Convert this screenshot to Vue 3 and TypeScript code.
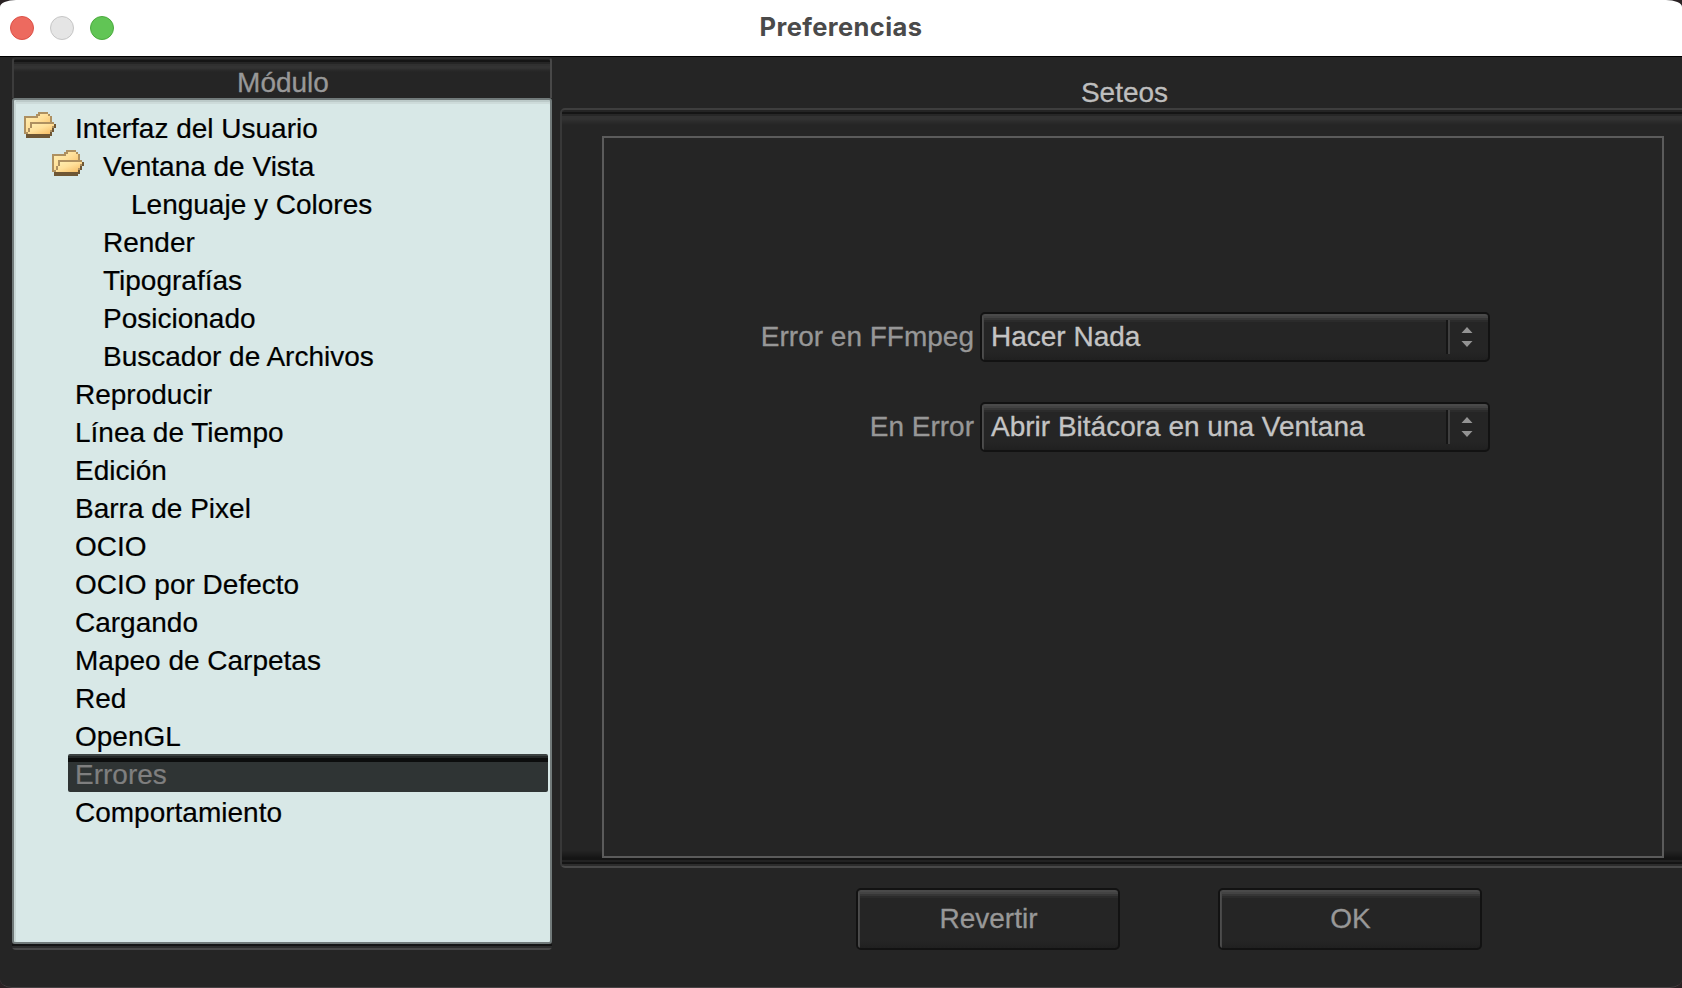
<script setup lang="ts">
import { ref } from 'vue'

interface TreeItem {
  label: string
  level: number
  folder?: boolean
}

interface Setting {
  label: string
  value: string
}

const items: TreeItem[] = [
  { label: 'Interfaz del Usuario', level: 0, folder: true },
  { label: 'Ventana de Vista', level: 1, folder: true },
  { label: 'Lenguaje y Colores', level: 2 },
  { label: 'Render', level: 1 },
  { label: 'Tipografías', level: 1 },
  { label: 'Posicionado', level: 1 },
  { label: 'Buscador de Archivos', level: 1 },
  { label: 'Reproducir', level: 0 },
  { label: 'Línea de Tiempo', level: 0 },
  { label: 'Edición', level: 0 },
  { label: 'Barra de Pixel', level: 0 },
  { label: 'OCIO', level: 0 },
  { label: 'OCIO por Defecto', level: 0 },
  { label: 'Cargando', level: 0 },
  { label: 'Mapeo de Carpetas', level: 0 },
  { label: 'Red', level: 0 },
  { label: 'OpenGL', level: 0 },
  { label: 'Errores', level: 0 },
  { label: 'Comportamiento', level: 0 },
]

const settings: Setting[] = [
  { label: 'Error en FFmpeg', value: 'Hacer Nada' },
  { label: 'En Error', value: 'Abrir Bitácora en una Ventana' },
]

const selected = ref('Errores')
</script>

<template>
  <div class="window">
    <header class="titlebar">
      <div class="lights">
        <span class="light close"></span>
        <span class="light minimize"></span>
        <span class="light zoom"></span>
      </div>
      <h1>Preferencias</h1>
    </header>

    <main class="body">
      <aside class="modules">
        <div class="modules-head">Módulo</div>
        <ul class="tree">
          <li
            v-for="item in items"
            :key="item.label"
            :class="['row', `level-${item.level}`, { selected: item.label === selected }]"
            @click="selected = item.label"
          >
            <span class="icon-slot">
              <svg v-if="item.folder" class="folder" viewBox="0 0 16 13" shape-rendering="crispEdges">
                <defs>
                  <linearGradient id="folder-fill" x1="0" y1="0" x2="1" y2="1">
                    <stop offset="0" stop-color="#ffefb2" />
                    <stop offset="0.45" stop-color="#ffe09a" />
                    <stop offset="1" stop-color="#f5b85e" />
                  </linearGradient>
                </defs>
                <path fill="#ae9060" d="M0 2h6V1h1V0h5v1h1v1h1v3h1v1h1v2h-1v2h-1v2H1v-1H0z" />
                <path fill="url(#folder-fill)" d="M1 3h6V2h1V1h4v1h1v3H3v3H2v2H1z" />
                <path fill="url(#folder-fill)" d="M4 6h11v1h-1v2h-1v2H2v-1h1V8h1z" />
                <path fill="#6e5634" d="M1 11h12v-1h1V8h1V6h1v2h-1v2h-1v2h-1v1H1z" />
              </svg>
            </span>
            <span class="row-label">{{ item.label }}</span>
          </li>
        </ul>
        <div class="modules-foot"></div>
      </aside>

      <section class="settings">
        <h2>Seteos</h2>
        <div class="panel">
          <div class="group">
            <div v-for="s in settings" :key="s.label" class="field">
              <label>{{ s.label }}</label>
              <div class="choice">
                <span class="choice-value">{{ s.value }}</span>
                <span class="choice-arrows">
                  <svg viewBox="0 0 12 20">
                    <path d="M6 0l5.5 6h-11zM6 20l5.5-6h-11z" fill="#939393" />
                  </svg>
                </span>
              </div>
            </div>
          </div>
        </div>
        <footer class="actions">
          <button type="button">Revertir</button>
          <button type="button">OK</button>
        </footer>
      </section>
    </main>
  </div>
</template>

<style>
html,
body {
  margin: 0;
  background: #2a2224;
  overflow: hidden;
}
</style>

<style scoped>
.window {
  box-sizing: border-box;
  width: 1682px;
  height: 988px;
  display: flex;
  flex-direction: column;
  overflow: hidden;
  background: #252525;
  border-bottom: 1px solid #484345;
  border-radius: 16px 16px 12px 12px / 7px 7px 9px 9px;
  font-family: 'Liberation Sans', Arial, sans-serif;
  font-size: 28px;
}

.titlebar {
  box-sizing: border-box;
  flex: none;
  height: 57px;
  display: grid;
  grid-template-columns: 1fr auto 1fr;
  align-items: center;
  background: #fff;
  border-bottom: 1px solid #000;
}
.lights {
  display: flex;
  gap: 16px;
  padding-left: 10px;
}
.light {
  box-sizing: border-box;
  width: 24px;
  height: 24px;
  border-radius: 50%;
  border: 1px solid;
}
.close { background: #ed6a5f; border-color: #dc5148; }
.minimize { background: #e5e5e5; border-color: #c6c6c6; }
.zoom { background: #61c555; border-color: #4bab3e; }
h1 {
  margin: 0;
  padding-bottom: 3px;
  font: 700 25.5px/32px Inter, sans-serif;
  letter-spacing: 0.4px;
  color: #4a4a4a;
}

.body {
  flex: 1;
  display: flex;
  padding-left: 12px;
}

/* Module tree */
.modules {
  flex: none;
  width: 540px;
  height: 893px;
  display: flex;
  flex-direction: column;
}
.modules-head {
  box-sizing: border-box;
  flex: none;
  height: 41px;
  padding-left: 2px;
  border: solid;
  border-width: 2px 2px 0;
  border-color: #2e2e2e #484848 transparent #3c3c3c;
  border-radius: 4px 4px 0 0;
  background: linear-gradient(#222 0 1px, #151515 1px 3px, #252525 3px 5px, #303030 5px 7px, #333 7px 9px, #2a2a2a 11px, #252525 13px);
  color: #989898;
  text-align: center;
  line-height: 47px;
  -webkit-text-stroke: 0.3px;
}
.tree {
  box-sizing: border-box;
  flex: 1;
  margin: 0;
  padding: 8px 2px 0 9px;
  list-style: none;
  border: 2px solid #717a7a;
  border-radius: 3px;
  background: #d8e8e7;
  box-shadow: inset 2px 0 #c8d6d5, inset 0 2px #bccac9, inset 0 4px #cddbda;
}
.row {
  display: flex;
  height: 38px;
  color: #000;
  line-height: 41px;
  white-space: nowrap;
  -webkit-text-stroke: 0.2px;
}
.level-1 { padding-left: 28px; }
.level-2 { padding-left: 56px; }
.icon-slot {
  flex: none;
  width: 45px;
  display: flex;
}
.folder {
  width: 32px;
  height: 26px;
  margin: 4px 0 0 1px;
}
.row-label {
  flex: 1;
  padding-left: 7px;
}
.selected .row-label {
  color: #7f7f7f;
  border-radius: 2px;
  background: linear-gradient(#3c4242 0 2px, #222626 2px 4px, #0c0d0d 4px 8px, #2f3434 8px);
}
.modules-foot {
  flex: none;
  height: 6px;
  background: linear-gradient(#141414 0 2px, #2c2c2c 2px 4px, #484848 4px);
  border-radius: 0 0 4px 4px;
}

/* Settings */
.settings {
  flex: 1;
  display: flex;
  flex-direction: column;
  padding-left: 8px;
  -webkit-text-stroke: 0.3px;
}
h2 {
  margin: 0;
  height: 51px;
  padding-left: 7px;
  text-align: center;
  font: 400 28px/71px 'Liberation Sans', Arial, sans-serif;
  color: #bebebe;
}
.panel {
  box-sizing: border-box;
  height: 760px;
  padding: 26px 18px 8px 40px;
  border: solid;
  border-width: 2px 0 2px 2px;
  border-color: #3e3e3e #3e3e3e #484848 #383838;
  border-radius: 5px 0 0 5px;
  background:
    linear-gradient(#242424 0 2px, #151515 2px 4px, #272727 4px 6px, #323232 6px 9px, #2d2d2d 11px, #252525 15px) top / 100% 16px no-repeat,
    linear-gradient(#252525 0, #191919 6px, #141414 8px 10px, #222 10px 12px, #141414 12px 14px, #2c2c2c 14px) bottom / 100% 16px no-repeat,
    #252525;
}
.group {
  box-sizing: border-box;
  width: 1062px;
  height: 722px;
  display: flex;
  flex-direction: column;
  gap: 40px;
  padding: 174px 172px 0 0;
  border: 2px solid #5b5b5b;
  background: #252525;
}
.field {
  display: flex;
  justify-content: flex-end;
  height: 50px;
}
label {
  padding-right: 6px;
  line-height: 49px;
  color: #979797;
}
.choice,
button {
  box-sizing: border-box;
  border: 2px solid #121212;
  border-radius: 5px;
  background:
    linear-gradient(90deg, #505050, #444) left / 2px 100% no-repeat,
    linear-gradient(#4a4a4a 0 2px, #434343 2px 4px, #363636 4px 6px, #2b2b2b 6px 8px, #252525 8px, #252525 calc(100% - 8px), #202020);
}
.choice {
  flex: none;
  width: 510px;
  display: flex;
  padding: 6px 0 6px 9px;
}
.choice-value {
  flex: 1;
  line-height: 33px;
  color: #c4c4c4;
  white-space: nowrap;
}
.choice-arrows {
  box-sizing: border-box;
  width: 42px;
  padding-right: 2px;
  border-left: 2px solid #161616;
  box-shadow: inset 2px 0 #404040;
  display: flex;
  justify-content: center;
  align-items: center;
}
.choice-arrows svg {
  width: 12px;
  height: 20px;
}

.actions {
  display: flex;
  gap: 98px;
  padding: 20px 0 0 296px;
}
button {
  width: 264px;
  height: 62px;
  padding: 0 0 1px 1px;
  font: 400 28px/1 'Liberation Sans', Arial, sans-serif;
  color: #989898;
  -webkit-text-stroke: 0.3px;
}
</style>
